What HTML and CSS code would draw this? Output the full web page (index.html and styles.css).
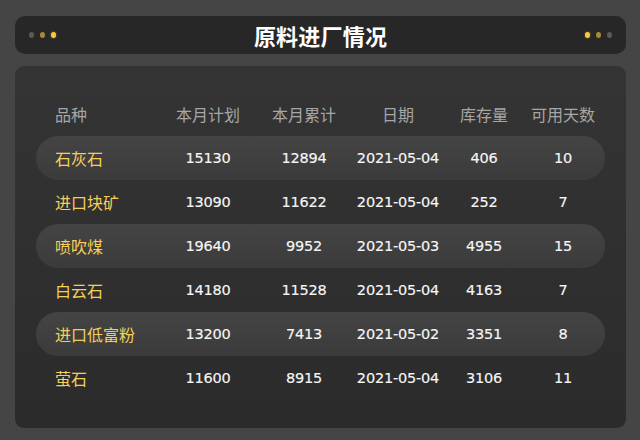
FILE: index.html
```html
<!DOCTYPE html>
<html lang="zh">
<head>
<meta charset="utf-8">
<title>原料进厂情况</title>
<link rel="stylesheet" href="styles.css">
</head>
<body>
<div class="page">
  <header class="titlebar">
    <div class="dots">
      <span class="dot dot-off"></span>
      <span class="dot dot-dim"></span>
      <span class="dot dot-on"></span>
    </div>
    <h1 class="title">原料进厂情况</h1>
    <div class="dots">
      <span class="dot dot-on"></span>
      <span class="dot dot-dim"></span>
      <span class="dot dot-off"></span>
    </div>
  </header>
  <section class="panel">
    <div class="row head">
      <div class="cell name">品种</div>
      <div class="cell">本月计划</div>
      <div class="cell">本月累计</div>
      <div class="cell">日期</div>
      <div class="cell">库存量</div>
      <div class="cell">可用天数</div>
    </div>
    <div class="row stripe">
      <div class="cell name">石灰石</div>
      <div class="cell num">15130</div>
      <div class="cell num">12894</div>
      <div class="cell num">2021-05-04</div>
      <div class="cell num">406</div>
      <div class="cell num">10</div>
    </div>
    <div class="row">
      <div class="cell name">进口块矿</div>
      <div class="cell num">13090</div>
      <div class="cell num">11622</div>
      <div class="cell num">2021-05-04</div>
      <div class="cell num">252</div>
      <div class="cell num">7</div>
    </div>
    <div class="row stripe">
      <div class="cell name">喷吹煤</div>
      <div class="cell num">19640</div>
      <div class="cell num">9952</div>
      <div class="cell num">2021-05-03</div>
      <div class="cell num">4955</div>
      <div class="cell num">15</div>
    </div>
    <div class="row">
      <div class="cell name">白云石</div>
      <div class="cell num">14180</div>
      <div class="cell num">11528</div>
      <div class="cell num">2021-05-04</div>
      <div class="cell num">4163</div>
      <div class="cell num">7</div>
    </div>
    <div class="row stripe">
      <div class="cell name">进口低富粉</div>
      <div class="cell num">13200</div>
      <div class="cell num">7413</div>
      <div class="cell num">2021-05-02</div>
      <div class="cell num">3351</div>
      <div class="cell num">8</div>
    </div>
    <div class="row">
      <div class="cell name">萤石</div>
      <div class="cell num">11600</div>
      <div class="cell num">8915</div>
      <div class="cell num">2021-05-04</div>
      <div class="cell num">3106</div>
      <div class="cell num">11</div>
    </div>
  </section>
</div>
</body>
</html>
```

FILE: styles.css
```css
* { box-sizing: border-box; }

html, body {
  margin: 0;
  padding: 0;
  background: #454545;
}

body {
  width: 640px;
  height: 440px;
  overflow: hidden;
  font-family: "Noto Sans CJK SC", "DejaVu Sans", sans-serif;
}

.page {
  padding: 16px 14px 0 15px;
  display: flex;
  flex-direction: column;
  gap: 12px;
}

.titlebar {
  height: 38px;
  background: #272727;
  border-radius: 10px;
  display: flex;
  align-items: center;
  justify-content: space-between;
  padding: 0 14px 0 14px;
}

.title {
  margin: 0;
  font-size: 22px;
  font-weight: 700;
  color: #ffffff;
  line-height: 1;
  letter-spacing: 0.2px;
}

.dots {
  display: flex;
  gap: 6px;
  align-items: center;
}

.dot {
  width: 5px;
  height: 6px;
  border-radius: 50%;
  display: block;
}

.dot-off { background: #5a5a5a; }
.dot-dim { background: #a8893c; }
.dot-on { background: #f5cb3a; box-shadow: 0 0 2px rgba(245, 203, 58, 0.6); }

.panel {
  width: 611px;
  height: 362px;
  border-radius: 9px;
  background: linear-gradient(to bottom, #343434, #2b2b2b);
  padding: 26px 21px 0 21px;
}

.row {
  display: grid;
  grid-template-columns: 124px 96px 96px 92px 80px 78px;
  height: 44px;
  align-items: center;
  border-radius: 22px;
}

.row.head { height: 44px; }

.stripe {
  background: linear-gradient(to bottom, #444444, #3b3b3b);
}

.cell {
  text-align: center;
  font-size: 16px;
  color: #f2f2f2;
  white-space: nowrap;
  line-height: 1;
}

.head .cell {
  color: #a6a6a6;
  font-size: 16px;
}

.cell.name {
  text-align: left;
  padding-left: 19px;
  color: #f5cf58;
}

.head .cell.name { color: #a6a6a6; }

.cell.num {
  font-family: "DejaVu Sans", sans-serif;
  font-size: 14.5px;
  letter-spacing: -0.2px;
  color: #f6f6f6;
  -webkit-text-stroke: 0.15px #f6f6f6;
}
```
